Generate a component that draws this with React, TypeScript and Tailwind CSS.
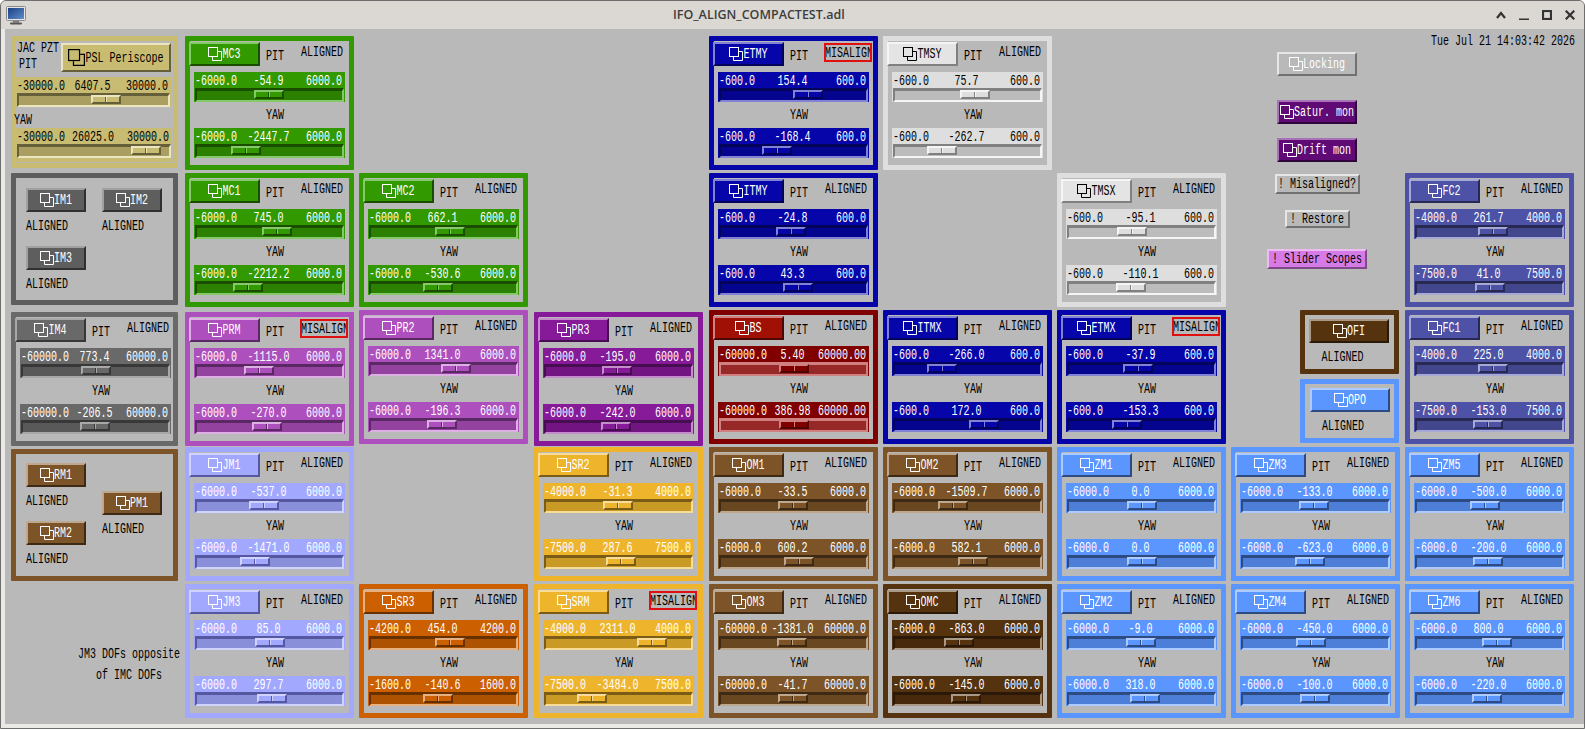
import React from 'react';

type Palette = {
  main: string;
  btn: string;
  border: string;
  bevel: string;
  trough: string;
  fg: string;
};

const makeP = (p: Palette) => p;

const green = makeP({ main: 'bg-[#339900]', btn: 'bg-[#339900]', border: 'border-[#339900]', bevel: 'border-t-[#85c96b] border-l-[#85c96b] border-b-[#1a4d00] border-r-[#1a4d00]', trough: 'bg-[#2b8000] border-t-[#1a4d00] border-l-[#1a4d00] border-b-[#85c96b] border-r-[#85c96b]', fg: 'text-white' });
const gray = makeP({ main: 'bg-[#5e5e5e]', btn: 'bg-[#5e5e5e]', border: 'border-[#5e5e5e]', bevel: 'border-t-[#a0a0a0] border-l-[#a0a0a0] border-b-[#303030] border-r-[#303030]', trough: 'bg-[#505050] border-t-[#303030] border-l-[#303030] border-b-[#a0a0a0] border-r-[#a0a0a0]', fg: 'text-white' });
const gray2 = makeP({ main: 'bg-[#696969]', btn: 'bg-[#696969]', border: 'border-[#696969]', bevel: 'border-t-[#a8a8a8] border-l-[#a8a8a8] border-b-[#383838] border-r-[#383838]', trough: 'bg-[#595959] border-t-[#383838] border-l-[#383838] border-b-[#a8a8a8] border-r-[#a8a8a8]', fg: 'text-white' });
const orchid = makeP({ main: 'bg-[#ad4fbd]', btn: 'bg-[#ad4fbd]', border: 'border-[#ad4fbd]', bevel: 'border-t-[#dcb0e2] border-l-[#dcb0e2] border-b-[#5a2862] border-r-[#5a2862]', trough: 'bg-[#93439f] border-t-[#5a2862] border-l-[#5a2862] border-b-[#dcb0e2] border-r-[#dcb0e2]', fg: 'text-white' });
const violet = makeP({ main: 'bg-[#871a99]', btn: 'bg-[#871a99]', border: 'border-[#871a99]', bevel: 'border-t-[#c48ccb] border-l-[#c48ccb] border-b-[#460d50] border-r-[#460d50]', trough: 'bg-[#721482] border-t-[#460d50] border-l-[#460d50] border-b-[#c48ccb] border-r-[#c48ccb]', fg: 'text-white' });
const blue = makeP({ main: 'bg-[#0505aa]', btn: 'bg-[#0505aa]', border: 'border-[#0505aa]', bevel: 'border-t-[#8282d4] border-l-[#8282d4] border-b-[#03035a] border-r-[#03035a]', trough: 'bg-[#04048f] border-t-[#03035a] border-l-[#03035a] border-b-[#8282d4] border-r-[#8282d4]', fg: 'text-white' });
const silver = makeP({ main: 'bg-[#dedede]', btn: 'bg-[#e4e4e4]', border: 'border-[#dedede]', bevel: 'border-t-[#f5f5f5] border-l-[#f5f5f5] border-b-[#808080] border-r-[#808080]', trough: 'bg-[#bcbcbc] border-t-[#808080] border-l-[#808080] border-b-[#f5f5f5] border-r-[#f5f5f5]', fg: 'text-black' });
const red = makeP({ main: 'bg-[#800000]', btn: 'bg-[#a01005]', border: 'border-[#800000]', bevel: 'border-t-[#d08080] border-l-[#d08080] border-b-[#4d0803] border-r-[#4d0803]', trough: 'bg-[#962828] border-t-[#d08080] border-l-[#d08080] border-b-[#d08080] border-r-[#d08080]', fg: 'text-white' });
const lilac = makeP({ main: 'bg-[#a3a8ff]', btn: 'bg-[#a3a8ff]', border: 'border-[#a3a8ff]', bevel: 'border-t-[#d1d3ff] border-l-[#d1d3ff] border-b-[#5558a0] border-r-[#5558a0]', trough: 'bg-[#8a8fd9] border-t-[#5558a0] border-l-[#5558a0] border-b-[#d1d3ff] border-r-[#d1d3ff]', fg: 'text-white' });
const yellow = makeP({ main: 'bg-[#eeb52c]', btn: 'bg-[#eeb52c]', border: 'border-[#eeb52c]', bevel: 'border-t-[#f7dc9a] border-l-[#f7dc9a] border-b-[#7a5c16] border-r-[#7a5c16]', trough: 'bg-[#c99a25] border-t-[#7a5c16] border-l-[#7a5c16] border-b-[#f7dc9a] border-r-[#f7dc9a]', fg: 'text-white' });
const orange = makeP({ main: 'bg-[#cc6000]', btn: 'bg-[#cc6000]', border: 'border-[#cc6000]', bevel: 'border-t-[#e8b080] border-l-[#e8b080] border-b-[#663000] border-r-[#663000]', trough: 'bg-[#ad5200] border-t-[#663000] border-l-[#663000] border-b-[#e8b080] border-r-[#e8b080]', fg: 'text-white' });
const brown = makeP({ main: 'bg-[#7c5428]', btn: 'bg-[#7c5428]', border: 'border-[#7c5428]', bevel: 'border-t-[#bda78f] border-l-[#bda78f] border-b-[#3d2914] border-r-[#3d2914]', trough: 'bg-[#694720] border-t-[#3d2914] border-l-[#3d2914] border-b-[#bda78f] border-r-[#bda78f]', fg: 'text-white' });
const umber = makeP({ main: 'bg-[#55330f]', btn: 'bg-[#55330f]', border: 'border-[#55330f]', bevel: 'border-t-[#aa9985] border-l-[#aa9985] border-b-[#2a1908] border-r-[#2a1908]', trough: 'bg-[#48290c] border-t-[#2a1908] border-l-[#2a1908] border-b-[#aa9985] border-r-[#aa9985]', fg: 'text-white' });
const sky = makeP({ main: 'bg-[#5b96ff]', btn: 'bg-[#5b96ff]', border: 'border-[#5b96ff]', bevel: 'border-t-[#aecbff] border-l-[#aecbff] border-b-[#2d4b80] border-r-[#2d4b80]', trough: 'bg-[#4d7fd9] border-t-[#2d4b80] border-l-[#2d4b80] border-b-[#aecbff] border-r-[#aecbff]', fg: 'text-white' });
const indigo = makeP({ main: 'bg-[#4d52a6]', btn: 'bg-[#4d52a6]', border: 'border-[#4d52a6]', bevel: 'border-t-[#a6a9d3] border-l-[#a6a9d3] border-b-[#272953] border-r-[#272953]', trough: 'bg-[#41468d] border-t-[#272953] border-l-[#272953] border-b-[#a6a9d3] border-r-[#a6a9d3]', fg: 'text-white' });
const gold = makeP({ main: 'bg-[#c8bc72]', btn: 'bg-[#c8bc72]', border: 'border-[#c8bc72]', bevel: 'border-t-[#ece6c0] border-l-[#ece6c0] border-b-[#66603a] border-r-[#66603a]', trough: 'bg-[#aa9f60] border-t-[#66603a] border-l-[#66603a] border-b-[#ece6c0] border-r-[#ece6c0]', fg: 'text-black' });
const plain = makeP({ main: 'bg-[#b9b9b9]', btn: 'bg-[#b9b9b9]', border: 'border-[#b9b9b9]', bevel: 'border-t-[#e6e6e6] border-l-[#e6e6e6] border-b-[#707070] border-r-[#707070]', trough: '', fg: 'text-white' });
const plainDark = makeP({ ...plain, fg: 'text-black' });
const plum = makeP({ main: 'bg-[#5f0a75]', btn: 'bg-[#5f0a75]', border: 'border-[#5f0a75]', bevel: 'border-t-[#a872b8] border-l-[#a872b8] border-b-[#30053c] border-r-[#30053c]', trough: '', fg: 'text-white' });
const pink = makeP({ main: 'bg-[#d67ae6]', btn: 'bg-[#d67ae6]', border: 'border-[#d67ae6]', bevel: 'border-t-[#ecbcf3] border-l-[#ecbcf3] border-b-[#7f4888] border-r-[#7f4888]', trough: '', fg: 'text-black' });

// X bitmap fonts are narrow and tall, so stretch a 6px-wide mono
const T: React.FC<{ children: React.ReactNode; className?: string }> = ({ children, className = '' }) => (
  <span className={`inline-block translate-y-px scale-y-[1.4] whitespace-pre ${className}`}>{children}</span>
);

const RelatedIcon: React.FC<{ size?: string }> = ({ size = 'w-[14px] h-[14px]' }) => (
  <svg viewBox="0 0 14 14" fill="none" stroke="currentColor" strokeWidth="1" className={`shrink-0 ${size}`}>
    <rect x="0.5" y="0.5" width="9" height="9" />
    <path d="M4.5 10V13.5H13.5V4.5H10" />
  </svg>
);

const Btn: React.FC<{
  c: Palette;
  label: string;
  size?: string;
  icon?: boolean;
  iconSize?: string;
  className?: string;
}> = ({ c, label, size = 'w-[71px] h-[24px]', icon = true, iconSize, className = '' }) => (
  <div className={`flex items-center justify-center border-2 ${c.btn} ${c.bevel} ${c.fg} ${size} ${className}`}>
    {icon && <RelatedIcon size={iconSize} />}
    <T>{label}</T>
  </div>
);

const Slider: React.FC<{ c: Palette; vals: string[]; className?: string }> = ({ c, vals, className = 'w-[151px]' }) => {
  const min = parseFloat(vals[0]);
  const max = parseFloat(vals[2]);
  const frac = (parseFloat(vals[1]) - min) / (max - min);
  return (
    <div className={`h-[30px] flex flex-col ${c.main} ${c.fg} ${className}`}>
      <div className="h-[16px] grid grid-cols-3 items-center pt-px pl-px pr-[3px]">
        <T className="justify-self-start">{vals[0]}</T>
        <T className="justify-self-center">{vals[1]}</T>
        <T className="justify-self-end">{vals[2]}</T>
      </div>
      <div className={`relative mx-px h-[14px] border-t-[3px] border-l-2 border-b-2 border-r-2 ${c.trough}`}>
        <div
          className={`absolute -top-px h-[9px] w-[30px] flex border-2 ${c.main} ${c.bevel}`}
          style={{ left: `calc((100% - 30px) * ${frac})` }}
        >
          <div className={`w-1/2 border-r ${c.bevel}`} />
          <div className={`w-1/2 border-l ${c.bevel}`} />
        </div>
      </div>
    </div>
  );
};

const Aligned: React.FC = () => <T>ALIGNED</T>;

type PanelProps = {
  name: string;
  pos: string;
  c: Palette;
  pit: string[];
  yaw: string[];
  mis?: boolean;
  className?: string;
};

const Panel: React.FC<PanelProps> = ({ name, pos, c, pit, yaw, mis, className = 'w-[169px]' }) => (
  <div className={`${pos} ${className} h-[134px] border-[5px] rounded-[1px] ${c.border} flex flex-col`}>
    <div className="h-[31px] flex items-start">
      <Btn c={c} label={name} className="-ml-px mt-px shrink-0" />
      <div className="ml-[6px] mt-[10px] w-[18px] h-[10px] leading-[10px] text-black shrink-0"><T>PIT</T></div>
      {mis ? (
        <div className="ml-[16px] mt-[2px] w-[48px] h-[19px] border-2 border-[#e01010] text-black overflow-hidden flex items-center shrink-0">
          <T className="-ml-px">MISALIGN</T>
        </div>
      ) : (
        <div className="ml-[17px] mt-[6px] h-[10px] leading-[10px] text-black shrink-0"><Aligned /></div>
      )}
    </div>
    <Slider c={c} vals={pit} className="w-[151px] ml-[4px]" />
    <div className="h-[26px] flex items-center pl-[76px] text-black"><T>YAW</T></div>
    <Slider c={c} vals={yaw} className="w-[151px] ml-[4px]" />
  </div>
);

const r = (m: string, v: string, x?: string) => [m, v, x ?? m.replace('-', '')];

const panels: PanelProps[] = [
  { name: 'MC3', pos: 'col-start-2 row-start-1', c: green, pit: r('-6000.0', '-54.9'), yaw: r('-6000.0', '-2447.7') },
  { name: 'ETMY', pos: 'col-start-5 row-start-1', c: blue, pit: r('-600.0', '154.4'), yaw: r('-600.0', '-168.4'), mis: true },
  { name: 'TMSY', pos: 'col-start-6 row-start-1', c: silver, pit: r('-600.0', '75.7'), yaw: r('-600.0', '-262.7') },

  { name: 'MC1', pos: 'col-start-2 row-start-2', c: green, pit: r('-6000.0', '745.0'), yaw: r('-6000.0', '-2212.2') },
  { name: 'MC2', pos: 'col-start-3 row-start-2', c: green, pit: r('-6000.0', '662.1'), yaw: r('-6000.0', '-530.6') },
  { name: 'ITMY', pos: 'col-start-5 row-start-2', c: blue, pit: r('-600.0', '-24.8'), yaw: r('-600.0', '43.3') },
  { name: 'TMSX', pos: 'col-start-7 row-start-2', c: silver, pit: r('-600.0', '-95.1'), yaw: r('-600.0', '-110.1') },
  { name: 'FC2', pos: 'col-start-9 row-start-2', c: indigo, pit: r('-4000.0', '261.7'), yaw: r('-7500.0', '41.0') },

  { name: 'IM4', pos: 'col-start-1 row-start-3 mt-[2px]', c: gray2, pit: r('-60000.0', '773.4'), yaw: r('-60000.0', '-206.5'), className: 'w-[167px]' },
  { name: 'PRM', pos: 'col-start-2 row-start-3 mt-[2px]', c: orchid, pit: r('-6000.0', '-1115.0'), yaw: r('-6000.0', '-270.0'), mis: true },
  { name: 'PR2', pos: 'col-start-3 row-start-3', c: orchid, pit: r('-6000.0', '1341.0'), yaw: r('-6000.0', '-196.3') },
  { name: 'PR3', pos: 'col-start-4 row-start-3 mt-[2px]', c: violet, pit: r('-6000.0', '-195.0'), yaw: r('-6000.0', '-242.0') },
  { name: 'BS', pos: 'col-start-5 row-start-3', c: red, pit: ['-60000.0', '5.40', '60000.00'], yaw: ['-60000.0', '386.98', '60000.00'] },
  { name: 'ITMX', pos: 'col-start-6 row-start-3', c: blue, pit: r('-600.0', '-266.0'), yaw: r('-600.0', '172.0') },
  { name: 'ETMX', pos: 'col-start-7 row-start-3', c: blue, pit: r('-600.0', '-37.9'), yaw: r('-600.0', '-153.3'), mis: true },
  { name: 'FC1', pos: 'col-start-9 row-start-3', c: indigo, pit: r('-4000.0', '225.0'), yaw: r('-7500.0', '-153.0') },

  { name: 'JM1', pos: 'col-start-2 row-start-4', c: lilac, pit: r('-6000.0', '-537.0'), yaw: r('-6000.0', '-1471.0') },
  { name: 'SR2', pos: 'col-start-4 row-start-4', c: yellow, pit: r('-4000.0', '-31.3'), yaw: r('-7500.0', '287.6') },
  { name: 'OM1', pos: 'col-start-5 row-start-4', c: brown, pit: r('-6000.0', '-33.5'), yaw: r('-6000.0', '600.2') },
  { name: 'OM2', pos: 'col-start-6 row-start-4', c: brown, pit: r('-6000.0', '-1509.7'), yaw: r('-6000.0', '582.1') },
  { name: 'ZM1', pos: 'col-start-7 row-start-4', c: sky, pit: r('-6000.0', '0.0'), yaw: r('-6000.0', '0.0') },
  { name: 'ZM3', pos: 'col-start-8 row-start-4', c: sky, pit: r('-6000.0', '-133.0'), yaw: r('-6000.0', '-623.0') },
  { name: 'ZM5', pos: 'col-start-9 row-start-4', c: sky, pit: r('-6000.0', '-500.0'), yaw: r('-6000.0', '-200.0') },

  { name: 'JM3', pos: 'col-start-2 row-start-5', c: lilac, pit: r('-6000.0', '85.0'), yaw: r('-6000.0', '297.7') },
  { name: 'SR3', pos: 'col-start-3 row-start-5', c: orange, pit: r('-4200.0', '454.0'), yaw: r('-1600.0', '-140.6') },
  { name: 'SRM', pos: 'col-start-4 row-start-5', c: yellow, pit: r('-4000.0', '2311.0'), yaw: r('-7500.0', '-3484.0'), mis: true },
  { name: 'OM3', pos: 'col-start-5 row-start-5', c: brown, pit: r('-60000.0', '-1381.0'), yaw: r('-60000.0', '-41.7') },
  { name: 'OMC', pos: 'col-start-6 row-start-5', c: umber, pit: r('-6000.0', '-863.0'), yaw: r('-6000.0', '-145.0') },
  { name: 'ZM2', pos: 'col-start-7 row-start-5', c: sky, pit: r('-6000.0', '-9.0'), yaw: r('-6000.0', '318.0') },
  { name: 'ZM4', pos: 'col-start-8 row-start-5', c: sky, pit: r('-6000.0', '-450.0'), yaw: r('-6000.0', '-100.0') },
  { name: 'ZM6', pos: 'col-start-9 row-start-5', c: sky, pit: r('-6000.0', '800.0'), yaw: r('-6000.0', '-220.0') },
];

// small button with ALIGNED under it, used in the IM and RM boxes
const Mini: React.FC<{ c: Palette; name: string }> = ({ c, name }) => (
  <div className="flex flex-col items-start">
    <Btn c={c} label={name} size="w-[60px] h-[24px]" />
    <div className="h-[27px] flex items-center text-black"><Aligned /></div>
  </div>
);

const MonitorIcon: React.FC = () => (
  <svg viewBox="0 0 20 19" className="w-[20px] h-[19px]">
    <defs>
      <linearGradient id="scr" x1="0" y1="0" x2="1" y2="1">
        <stop offset="0" stopColor="#1c3f86" />
        <stop offset="1" stopColor="#5f8fc9" />
      </linearGradient>
    </defs>
    <rect x="0.5" y="0.5" width="19" height="14" rx="1" fill="#e6e6e6" stroke="#8a8a8a" />
    <rect x="2" y="2" width="16" height="11" fill="url(#scr)" />
    <rect x="7" y="15" width="6" height="1.5" fill="#777" />
    <rect x="4" y="16.5" width="12" height="2" rx="1" fill="#555" />
  </svg>
);

const App: React.FC = () => (
  <div className="w-[1585px] h-[729px] flex flex-col overflow-hidden bg-[#b9b9b9] border border-[#6e6e6e] rounded-t-[6px] font-['Liberation_Mono',monospace] text-[10px] leading-[10px]">
    <div className="h-[28px] shrink-0 flex items-center bg-[#dbd8d4] pl-[5px] pr-[3px]">
      <MonitorIcon />
      <span className="ml-[647px] font-['Open_Sans',sans-serif] font-semibold text-[12.5px] leading-[16px] text-[#3d3d3d]">
        IFO_ALIGN_COMPACTEST.adl
      </span>
      <div className="ml-auto flex text-[#333333]">
        <div className="w-[23px] h-[28px] flex items-center justify-center">
          <svg viewBox="0 0 10 8" className="w-[10px] h-[8px]" fill="none" stroke="currentColor" strokeWidth="2.2"><path d="M1 7L5 2L9 7" /></svg>
        </div>
        <div className="w-[23px] h-[28px] flex items-center justify-center">
          <svg viewBox="0 0 10 10" className="w-[10px] h-[10px]" fill="none" stroke="currentColor" strokeWidth="2.2"><path d="M0 9.5H10" /></svg>
        </div>
        <div className="w-[23px] h-[28px] flex items-center justify-center">
          <svg viewBox="0 0 10 10" className="w-[10px] h-[10px]" fill="none" stroke="currentColor" strokeWidth="2.2"><rect x="1" y="1" width="8" height="8" /></svg>
        </div>
        <div className="w-[23px] h-[28px] flex items-center justify-center">
          <svg viewBox="0 0 10 10" className="w-[10px] h-[10px]" fill="none" stroke="currentColor" strokeWidth="2.2"><path d="M0.7 0.7L9.3 9.3M9.3 0.7L0.7 9.3" /></svg>
        </div>
      </div>
    </div>

    <div className="flex-1 border-l-[4px] border-b-[4px] border-[#ebe9e6] pt-[7px] pl-[6px]">
      <div className="grid grid-cols-[174px_174px_175px_175px_174px_174px_174px_174px_170px] grid-rows-[137px_137px_137px_137px_134px]">
        {/* JAC periscope box */}
        <div className={`col-start-1 row-start-1 w-[167px] h-[132px] border-[5px] rounded-[1px] ${gold.border} flex flex-col`}>
          <div className="h-[36px] flex items-start text-black">
            <div className="w-[45px] shrink-0 flex flex-col">
              <div className="mt-[2px] ml-px h-[10px] leading-[10px]"><T>JAC PZT</T></div>
              <div className="mt-[6px] ml-[3px] h-[10px] leading-[10px]"><T>PIT</T></div>
            </div>
            <Btn c={gold} label="PSL Periscope" size="w-[110px] h-[29px]" iconSize="w-[17px] h-[17px]" className="mt-[2px]" />
          </div>
          <Slider c={gold} vals={r('-30000.0', '6407.5')} className="w-[155px]" />
          <div className="h-[21px] flex items-center pt-[4px] -ml-[2px] text-black"><T>YAW</T></div>
          <Slider c={gold} vals={r('-30000.0', '26025.0')} className="w-[156px] h-[34px]" />
        </div>

        {/* IM box */}
        <div className={`col-start-1 row-start-2 w-[167px] h-[132px] border-[5px] rounded-[1px] ${gray.border} pl-[10px] pt-[10px]`}>
          <div className="grid grid-cols-[76px_76px] auto-rows-[58px]">
            <Mini c={gray} name="IM1" />
            <Mini c={gray} name="IM2" />
            <Mini c={gray} name="IM3" />
          </div>
        </div>

        {/* RM box */}
        <div className={`col-start-1 row-start-4 mt-[2px] w-[167px] h-[132px] border-[5px] rounded-[1px] ${brown.border} pl-[10px] flex`}>
          <div className="w-[76px] pt-[9px] flex flex-col gap-[7px]">
            <Mini c={brown} name="RM1" />
            <Mini c={brown} name="RM2" />
          </div>
          <div className="pt-[37px]">
            <Mini c={brown} name="PM1" />
          </div>
        </div>

        <div className="col-start-1 row-start-5 ml-[67px] w-[102px] pt-[59px] flex flex-col items-center text-black leading-[21px]">
          <T>JM3 DOFs opposite</T>
          <T>of IMC DOFs</T>
        </div>

        {panels.map((p) => (
          <Panel key={p.name} {...p} />
        ))}

        {/* Related displays and shell commands */}
        <div className="col-start-8 row-start-1 row-span-2 w-[172px] pt-[16px] flex flex-col items-center">
          <Btn c={plain} label="Locking" size="w-[80px] h-[24px]" />
          <Btn c={plum} label="Satur. mon" size="w-[80px] h-[24px]" className="mt-[24px]" />
          <Btn c={plum} label="Drift mon" size="w-[80px] h-[24px]" className="mt-[14px]" />
          <Btn c={plainDark} label="! Misaligned?" icon={false} size="w-[85px] h-[20px]" className="mt-[12px]" />
          <Btn c={plainDark} label="! Restore" icon={false} size="w-[65px] h-[18px]" className="mt-[16px]" />
          <Btn c={pink} label="! Slider Scopes" icon={false} size="w-[100px] h-[20px]" className="mt-[21px]" />
        </div>

        <div className="col-start-8 row-start-3 pl-[69px] flex flex-col gap-[5px]">
          <div className={`w-[99px] h-[64px] border-[5px] rounded-[1px] ${umber.border} pl-[4px] pt-[4px]`}>
            <Btn c={umber} label="OFI" size="w-[80px] h-[24px]" />
            <div className="h-[28px] flex items-center justify-center pr-[18px] text-black"><Aligned /></div>
          </div>
          <div className={`w-[99px] h-[64px] border-[5px] rounded-[1px] ${sky.border} pl-[5px] pt-[4px]`}>
            <Btn c={sky} label="OPO" size="w-[80px] h-[24px]" />
            <div className="h-[28px] flex items-center justify-center pr-[18px] text-black"><Aligned /></div>
          </div>
        </div>

        <div className="col-start-9 row-start-1 text-right text-black">
          <T>Tue Jul 21 14:03:42 2026</T>
        </div>
      </div>
    </div>
  </div>
);

export default App;
